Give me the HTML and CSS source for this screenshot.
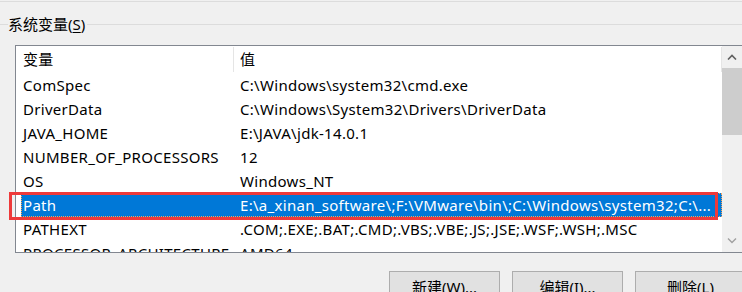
FILE: index.html
```html
<!DOCTYPE html>
<html lang="zh-CN">
<head>
    <meta charset="UTF-8">
    <title>系统变量</title>
    <link rel="stylesheet" href="styles.css">
</head>
<body>
    <div class="top-rule"></div>

    <div class="group-title">
        <span class="rule short"></span>
        <span class="label">系统变量(<u>S</u>)</span>
        <span class="rule long"></span>
    </div>

    <div class="listbox">
        <div class="list">
            <div class="head">
                <div class="col name">变量</div>
                <div class="col value">值</div>
            </div>
            <div class="row"><div class="name">ComSpec</div><div class="value">C:\Windows\system32\cmd.exe</div></div>
            <div class="row"><div class="name">DriverData</div><div class="value">C:\Windows\System32\Drivers\DriverData</div></div>
            <div class="row"><div class="name">JAVA_HOME</div><div class="value">E:\JAVA\jdk-14.0.1</div></div>
            <div class="row"><div class="name">NUMBER_OF_PROCESSORS</div><div class="value">12</div></div>
            <div class="row"><div class="name">OS</div><div class="value">Windows_NT</div></div>
            <div class="row selected"><div class="name">Path</div><div class="value">E:\a_xinan_software\;F:\VMware\bin\;C:\Windows\system32;C:\...</div></div>
            <div class="row"><div class="name">PATHEXT</div><div class="value">.COM;.EXE;.BAT;.CMD;.VBS;.VBE;.JS;.JSE;.WSF;.WSH;.MSC</div></div>
            <div class="row"><div class="name">PROCESSOR_ARCHITECTURE</div><div class="value">AMD64</div></div>
        </div>

        <div class="scrollbar">
            <div class="arrow">
                <svg width="10" height="6" viewBox="0 0 10 6"><path d="M1 5.5 L5 1.5 L9 5.5" fill="none" stroke="#606060" stroke-width="1.6"/></svg>
            </div>
            <div class="thumb"></div>
            <div class="track"></div>
            <div class="arrow">
                <svg width="10" height="6" viewBox="0 0 10 6"><path d="M1 0.5 L5 4.5 L9 0.5" fill="none" stroke="#a0a0a0" stroke-width="1.4"/></svg>
            </div>
        </div>
    </div>

    <div class="buttons">
        <button class="btn">新建(<u>W</u>)...</button>
        <button class="btn">编辑(<u>I</u>)...</button>
        <button class="btn">删除(<u>L</u>)</button>
    </div>

    <!-- red marker drawn over the Path row -->
    <div class="marker"></div>
</body>
</html>
```

FILE: styles.css
```css
* {
    margin: 0;
    padding: 0;
    box-sizing: border-box;
}
body {
    width: 742px;
    height: 292px;
    overflow: hidden;
    position: relative;
    background: #f0f0f0;
    color: #000;
    font-family: "Noto Sans", "Noto Sans CJK SC", sans-serif;
    font-size: 15px;
    letter-spacing: 0.3px;
}
.top-rule {
    margin-top: 1px;
    height: 1px;
    background: #dcdcdc;
}

/* group box title */
.group-title {
    display: flex;
    align-items: center;
    height: 20px;
    margin-top: 12px;
}
.group-title .rule {
    height: 1px;
    background: #dcdcdc;
}
.group-title .short {
    width: 8px;
}
.group-title .long {
    flex: 1;
}
.group-title .label {
    padding-right: 2px;
    line-height: 20px;
    letter-spacing: 0;
}
.group-title u {
    text-underline-offset: 2px;
}

/* list view */
.listbox {
    margin-top: 11px;
    margin-left: 15px;
    width: 728px;
    height: 208px;
    border: 1px solid #828790;
    background: #fff;
    display: flex;
    overflow: hidden;
}
.list {
    width: 706px;
    overflow: hidden;
}
.head {
    display: flex;
    height: 27px;
    align-items: center;
}
.head .col {
    height: 25px;
    line-height: 25px;
    border-right: 1px solid #e5e5e5;
}
.head .name {
    width: 218px;
    padding-left: 7px;
}
.head .value {
    flex: 1;
    padding-left: 6px;
}
.row {
    display: flex;
    height: 24px;
    line-height: 24px;
    margin-left: 5px;
    white-space: nowrap;
}
.row .name {
    width: 212px;
    padding-left: 2px;
    overflow: hidden;
}
.row .value {
    flex: 1;
    padding-left: 7px;
    overflow: hidden;
}
.row.selected {
    background: #0078d7;
    color: #fff;
    outline: 1px dotted #f7a25a;
    outline-offset: -1px;
}

/* scrollbar */
.scrollbar {
    width: 20px;
    display: flex;
    flex-direction: column;
    background: #f0f0f0;
}
.arrow {
    height: 22px;
    display: flex;
    align-items: center;
    justify-content: center;
}
.thumb {
    height: 67px;
    background: #cdcdcd;
}
.track {
    flex: 1;
}

/* buttons */
.buttons {
    display: flex;
    gap: 12px;
    margin-top: 18px;
    margin-left: 389px;
}
.btn {
    width: 111px;
    height: 30px;
    background: #e1e1e1;
    border: 1px solid #adadad;
    font-family: "Noto Sans", "Noto Sans CJK SC", sans-serif;
    font-size: 15px;
    color: #000;
    flex-shrink: 0;
}

.marker {
    position: absolute;
    left: 9px;
    top: 192px;
    width: 709px;
    height: 28px;
    border: 3px solid #ee3a3a;
}
```
